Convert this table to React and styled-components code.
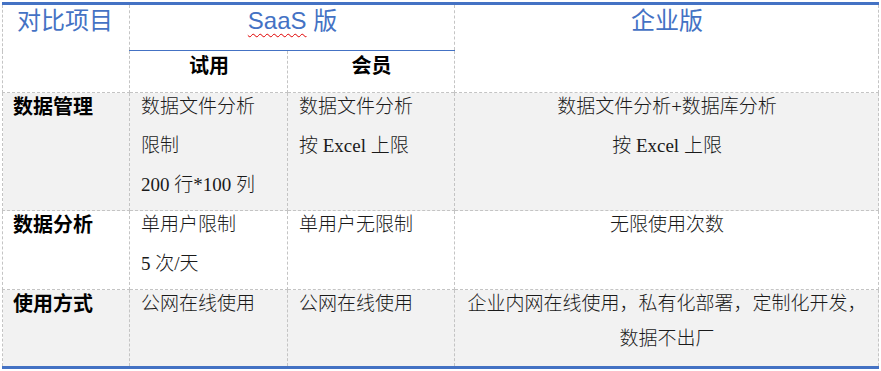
import React from "react";
import styled, { createGlobalStyle } from "styled-components";

const Global = createGlobalStyle`
  html, body { margin: 0; padding: 0; background: #ffffff; }
  body { font-family: "Liberation Serif", "Noto Sans CJK SC", serif; color: #111; }
`;

const BLUE = "#4472c4";
const DASH = "1px dashed #c4c4c4";

const Page = styled.div`
  padding: 2px 0 0 2px;
`;

const Table = styled.table`
  width: 876px;
  table-layout: fixed;
  border-collapse: collapse;
  border-top: 3px solid ${BLUE};
  border-bottom: 3px solid ${BLUE};
`;

const Row = styled.tr`
  height: ${(p) => p.$h}px;
  background: ${(p) => (p.$shade ? "#f2f2f2" : "#ffffff")};
`;

const Cell = styled.td`
  border: ${DASH};
  vertical-align: top;
  padding: 0 10px 0 ${(p) => p.$pl ?? 11}px;
  text-align: ${(p) => (p.$center ? "center" : "left")};
  font-size: 19px;
  font-weight: 300;
  color: #1a1a1a;
  ${(p) => p.$blueBottom && `border-bottom: 1px solid ${BLUE};`}
`;

const HeadText = styled.div`
  font-family: "Liberation Sans", "Noto Sans CJK SC", sans-serif;
  font-size: 24px;
  line-height: 31px;
  color: ${BLUE};
  font-weight: 400;
`;

const SubHead = styled.div`
  font-family: "Liberation Serif", "Noto Sans CJK SC", serif;
  font-size: 20px;
  line-height: 30px;
  font-weight: 700;
  color: #000;
`;

const RowLabel = styled.div`
  font-size: 20px;
  line-height: 28px;
  font-weight: 700;
  color: #000;
`;

const Line = styled.div`
  line-height: 28px;
  padding-bottom: ${(p) => p.$gap ?? 11}px;
  white-space: nowrap;
`;

const Spell = styled.span`
  text-decoration: underline wavy #e00000;
  text-decoration-thickness: 1px;
  text-underline-offset: 4px;
`;

const rows = [
  {
    label: "数据管理",
    h: 116,
    shade: true,
    trial: ["数据文件分析", "限制", "200 行*100 列"],
    member: ["数据文件分析", "按 Excel 上限"],
    ent: ["数据文件分析+数据库分析", "按 Excel 上限"],
  },
  {
    label: "数据分析",
    h: 78,
    shade: false,
    trial: ["单用户限制", "5 次/天"],
    member: ["单用户无限制"],
    ent: ["无限使用次数"],
  },
  {
    label: "使用方式",
    h: 78,
    shade: true,
    trial: ["公网在线使用"],
    member: ["公网在线使用"],
    ent: ["企业内网在线使用，私有化部署，定制化开发，", "数据不出厂"],
    gap: 7,
  },
];

export default function App() {
  return (
    <>
      <Global />
      <Page>
        <Table>
          <colgroup>
            <col style={{ width: 127 }} />
            <col style={{ width: 158 }} />
            <col style={{ width: 167 }} />
            <col style={{ width: 424 }} />
          </colgroup>
          <tbody>
            <Row $h={47}>
              <Cell rowSpan={2} $pl={14}>
                <HeadText>对比项目</HeadText>
              </Cell>
              <Cell colSpan={2} $center $blueBottom>
                <HeadText>
                  <Spell>SaaS</Spell> 版
                </HeadText>
              </Cell>
              <Cell rowSpan={2} $center>
                <HeadText>企业版</HeadText>
              </Cell>
            </Row>
            <Row $h={42}>
              <Cell $center>
                <SubHead>试用</SubHead>
              </Cell>
              <Cell $center>
                <SubHead>会员</SubHead>
              </Cell>
            </Row>
            {rows.map((r) => (
              <Row key={r.label} $h={r.h} $shade={r.shade}>
                <Cell $pl={10}>
                  <RowLabel>{r.label}</RowLabel>
                </Cell>
                <Cell>
                  {r.trial.map((t) => (
                    <Line key={t}>{t}</Line>
                  ))}
                </Cell>
                <Cell>
                  {r.member.map((t) => (
                    <Line key={t}>{t}</Line>
                  ))}
                </Cell>
                <Cell $center>
                  {r.ent.map((t) => (
                    <Line key={t} $gap={r.gap}>
                      {t}
                    </Line>
                  ))}
                </Cell>
              </Row>
            ))}
          </tbody>
        </Table>
      </Page>
    </>
  );
}
